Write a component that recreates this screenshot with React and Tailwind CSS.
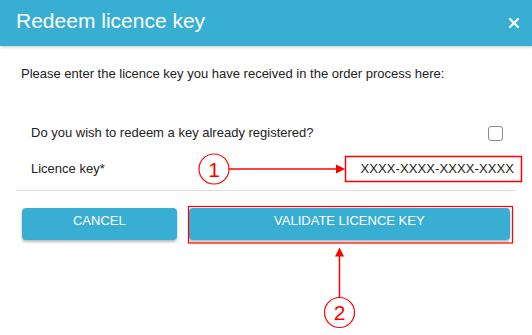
import React from "react";

// annotation overlay: numbered callouts + red frames drawn over the dialog
function Callouts() {
    const red = "#ff0000";
    return (
        <svg
            className="pointer-events-none absolute left-0 top-0"
            width="532"
            height="335"
            viewBox="0 0 532 335"
        >
            {/* 1 -> licence key field */}
            <rect x="345.5" y="156.5" width="176" height="25" fill="none" stroke={red} strokeWidth="1.5" />
            <circle cx="214" cy="169" r="15" fill="none" stroke={red} strokeWidth="1.2" />
            <text x="214" y="176.5" textAnchor="middle" fontSize="21" fill={red} fontFamily="Liberation Sans, Arial, sans-serif">1</text>
            <line x1="229" y1="169" x2="337" y2="169" stroke={red} strokeWidth="1.5" />
            <polygon points="345,169 336,164.5 336,173.5" fill={red} />

            {/* 2 -> validate button */}
            <rect x="188.5" y="206.5" width="324" height="36.5" fill="none" stroke={red} strokeWidth="1.2" />
            <circle cx="339.5" cy="312.5" r="15" fill="none" stroke={red} strokeWidth="1.2" />
            <text x="339.5" y="320" textAnchor="middle" fontSize="21" fill={red} fontFamily="Liberation Sans, Arial, sans-serif">2</text>
            <line x1="339.5" y1="297.5" x2="339.5" y2="255" stroke={red} strokeWidth="1.5" />
            <polygon points="339.5,247.5 335,256.5 344,256.5" fill={red} />
        </svg>
    );
}

function App() {
    return (
        <div className="relative h-[335px] w-[532px] overflow-hidden bg-white font-['Liberation_Sans',Arial,sans-serif] text-[#222]">
            {/* header */}
            <div className="relative z-10 flex h-[46px] items-start justify-between bg-[#38aed3] pl-[16px] pr-[13px] shadow-[0_1px_3px_rgba(0,0,0,0.22)]">
                <h4 className="pt-[9px] text-[21px] leading-[24px] text-white">Redeem licence key</h4>
                <svg className="mt-[18px]" width="10" height="10" viewBox="0 0 10 10">
                    <path d="M1 1L9 9M9 1L1 9" stroke="#fff" strokeWidth="2" strokeLinecap="square" />
                </svg>
            </div>

            <p className="mt-[20px] px-[21px] text-[13px] leading-[16px]">
                Please enter the licence key you have received in the order process here:
            </p>

            <div className="mx-[16px] mt-[33px]">
                <div className="flex h-[36px] items-center justify-between pl-[15px] pr-[13px] text-[13px] leading-[16px]">
                    <span>Do you wish to redeem a key already registered?</span>
                    <span className="h-[15px] w-[15px] rounded-[3px] border border-[#8a8a8a] bg-white"></span>
                </div>
                <div className="flex h-[36px] items-center justify-between pl-[15px] pr-[2px] text-[13px] leading-[16px]">
                    <span>Licence key*</span>
                    <span className="tracking-[0.1px]">XXXX-XXXX-XXXX-XXXX</span>
                </div>
                <div className="mt-[3px] border-t border-[#dddddd]"></div>
            </div>

            <div className="mx-[16px] mt-[17px] flex">
                <div className="w-1/3 px-[6px]">
                    <button className="flex h-[32px] w-full items-center justify-center rounded-[4px] bg-[#38aed3] pb-[6px] pt-0 text-[13px] uppercase leading-[16px] text-white shadow-[0_2px_3px_rgba(0,0,0,0.28)]">
                        Cancel
                    </button>
                </div>
                <div className="w-2/3 px-[6px]">
                    <button className="flex h-[32px] w-full items-center justify-center rounded-[4px] bg-[#38aed3] pb-[6px] pt-0 text-[13px] uppercase leading-[16px] text-white shadow-[0_2px_3px_rgba(0,0,0,0.28)]">
                        Validate licence key
                    </button>
                </div>
            </div>

            <Callouts />
        </div>
    );
}

export default App;
